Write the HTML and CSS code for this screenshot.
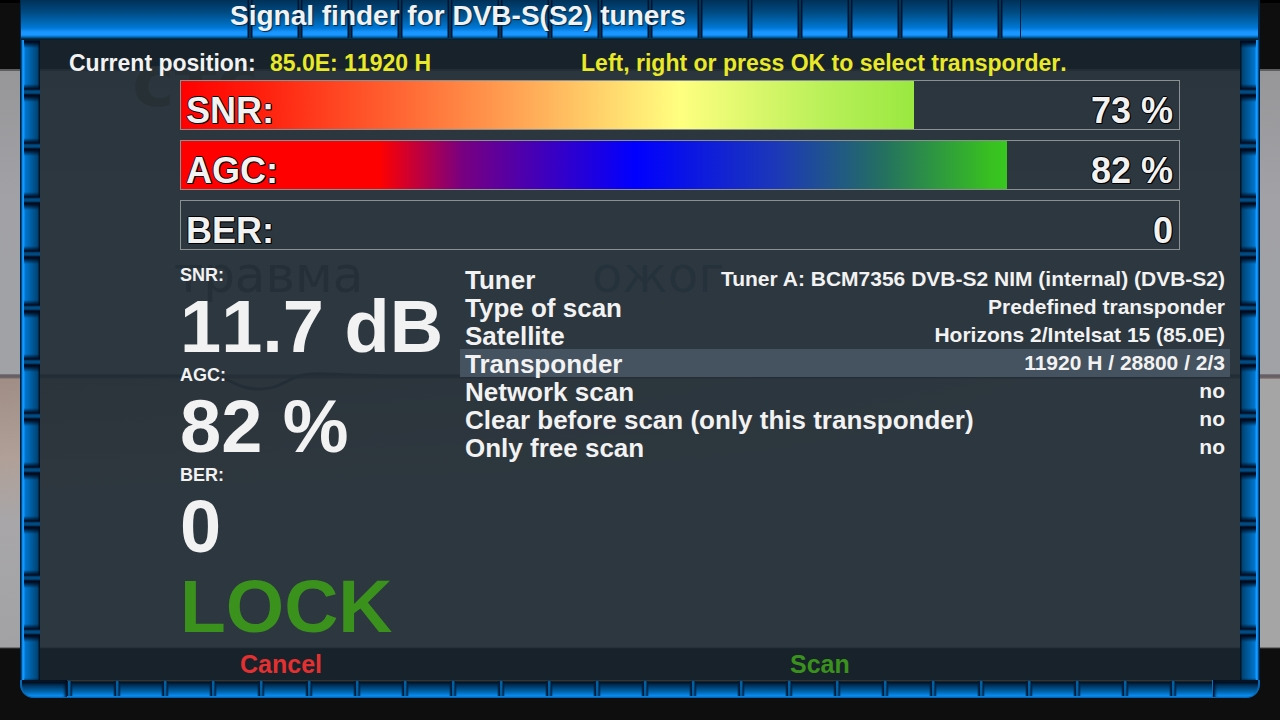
FILE: index.html
```html
<!DOCTYPE html>
<html lang="en">
<head>
<meta charset="utf-8">
<title>Signal finder for DVB-S(S2) tuners</title>
<link rel="stylesheet" href="styles.css">
</head>
<body>
<div class="broadcast" aria-hidden="true">
  <span class="ghost ghost-logo">стс</span>
  <span class="ghost ghost-left">травма</span>
  <span class="ghost ghost-right">ожог</span>
  <svg class="ghost-curve" viewBox="0 0 1280 40"><path d="M0 6H215C230 8 238 20 262 19C285 18 288 5 312 4C330 3 350 6 400 6H560C610 5 620 0 660 0S710 6 760 6H1280" fill="none" stroke="#666066" stroke-width="3"/></svg>
</div>
<div class="window">
  <header class="titlebar">
    <h1 class="title">Signal finder for DVB-S(S2) tuners</h1>
  </header>
  <div class="middle">
    <div class="rail rail-left"></div>
    <main class="panel">
      <div class="position">
        <p class="current">Current position: <strong class="yellow">85.0E: 11920 H</strong></p>
        <p class="hint yellow">Left, right or press OK to select transporder.</p>
      </div>
      <section class="bars">
        <div class="bar"><div class="fill fill-snr" style="width:73.4%"></div><span>SNR:</span><span>73 %</span></div>
        <div class="bar"><div class="fill fill-agc" style="width:82.8%"></div><span>AGC:</span><span>82 %</span></div>
        <div class="bar"><span>BER:</span><span>0</span></div>
      </section>
      <div class="details">
        <section class="readings">
          <dl class="values">
            <dt>SNR:</dt><dd>11.7 dB</dd>
            <dt>AGC:</dt><dd>82 %</dd>
            <dt>BER:</dt><dd>0</dd>
          </dl>
          <p class="lock">LOCK</p>
        </section>
        <ul class="menu">
          <li><span>Tuner</span><span class="value">Tuner A: BCM7356 DVB-S2 NIM (internal) (DVB-S2)</span></li>
          <li><span>Type of scan</span><span class="value">Predefined transponder</span></li>
          <li><span>Satellite</span><span class="value">Horizons 2/Intelsat 15 (85.0E)</span></li>
          <li class="selected"><span>Transponder</span><span class="value">11920 H / 28800 / 2/3</span></li>
          <li><span>Network scan</span><span class="value">no</span></li>
          <li><span>Clear before scan (only this transponder)</span><span class="value">no</span></li>
          <li><span>Only free scan</span><span class="value">no</span></li>
        </ul>
      </div>
      <footer class="actions">
        <button type="button" class="cancel">Cancel</button>
        <button type="button" class="scan">Scan</button>
      </footer>
    </main>
    <div class="rail rail-right"></div>
  </div>
  <div class="base"><div class="base-start"></div><div class="base-tiles"></div><div class="base-end"></div></div>
</div>
</body>
</html>
```
FILE: styles.css
```css
* { box-sizing: border-box; margin: 0; padding: 0; }
body {
  position: relative;
  min-height: 100vh;
  overflow: hidden;
  font-family: "Liberation Sans", Arial, sans-serif;
  font-weight: bold;
  font-kerning: none;
  color: #f2f2f2;
  background:
    linear-gradient(90deg, transparent, #a6a5a6) 0 379px / 100% 268px no-repeat,
    linear-gradient(#000 0 3px, #0e0e0e 3px 69px, #5d5d5f 69px 71px, #97979a 71px, #a2a2a6 200px, #a0a2a6 374px, #776b69 375px 378px, #a08e86 379px, #b0a098 460px, #a8a6a8 520px, #a2a2a5 647px, #444 648px, #0e0e0e 649px);
}
.window {
  position: relative;
  display: flex;
  flex-direction: column;
  min-height: 698px;
  margin: 0 20px 22px;
}
.titlebar {
  --metal: linear-gradient(#003157 0, #004a80 12px, #0066b2 22px, #0078d7 28px, #1a96ff 32px, #1a96ff 35px, #0068b9 37px, #07202f 39px, #07202f 40px);
  height: 40px;
  padding-left: 209px;
  border-left: 1px solid #00284d;
  border-right: 2px solid #00284d;
  background:
    linear-gradient(#001d38, #001d38) 999px 0 / 1px 38px no-repeat,
    var(--metal) -774px 0 / 1000px 40px no-repeat,
    var(--metal) 984px 0 / 1000px 40px no-repeat,
    linear-gradient(90deg, transparent 0, #001529 1px 2px, #00508d 3px, #001529 4px 5px, transparent 6px) 226px 0 / 50px 38px repeat-x,
    var(--metal);
}
.title { font-size: 28px; line-height: 31px; white-space: nowrap; text-shadow: 1px 1px 1px #00284d; }
.middle { flex: 1; display: flex; }
.rail { width: 20px; flex: none; }
.rail-left {
  background:
    linear-gradient(transparent 1px, #000a1c 6px, #004b83 8px 10px, #000a1c 12px 13px, transparent 19px) 4px 43px / 16px 54px,
    linear-gradient(90deg, #00213d 0 1px, #0879dc 2px, #129aff 3px 4px, #0076cf 5px, #0062aa 10px, #004272 18px, #001527 19px);
  background-repeat: repeat-y;
}
.rail-right {
  background:
    linear-gradient(transparent 1px, #000a1c 6px, #004b83 8px 10px, #000a1c 12px 13px, transparent 19px) 0 43px / 16px 54px,
    linear-gradient(270deg, #00213d 0 1px, #0879dc 2px, #129aff 3px 4px, #0076cf 5px, #0062aa 10px, #004272 18px, #001527 19px);
  background-repeat: repeat-y;
}
.panel {
  flex: 1;
  min-width: 0;
  display: flex;
  flex-direction: column;
  background: rgba(25, 37, 47, 0.86);
}
.position { display: flex; gap: 150px; height: 40px; padding-left: 29px; font-size: 23px; line-height: 46px; white-space: nowrap; }
.current strong { margin-left: 8px; }
.yellow { color: #e9e928; }
.bars { display: flex; flex-direction: column; gap: 10px; padding: 0 60px 0 140px; }
.bar {
  position: relative;
  display: flex;
  justify-content: space-between;
  height: 50px;
  padding: 0 6px 0 5px;
  border: 1px solid #8b9190;
  font-size: 36px;
  line-height: 60px;
  text-shadow: 1px 0 #000, -1px 0 #000, 0 1px #000, 0 -1px #000, 1px 1px #000;
}
.bar span { position: relative; }
.fill { position: absolute; inset: 0 auto 0 0; }
.fill-snr { background: linear-gradient(90deg, #f00 0, #ff1c0c 10%, #ff6a35 31%, #ffa454 46%, #ffff80 68%, #b8f058 88%, #9ae840 100%); }
.fill-agc { background: linear-gradient(90deg, #f00 0 24%, #780080 34%, #00f 55%, #1c38b8 72%, #247060 85%, #38c020 98%, #38c820 100%); }
.details { flex: 1; display: flex; gap: 20px; padding: 15px 10px 0 140px; }
.readings { width: 260px; flex: none; white-space: nowrap; }
dt { margin-bottom: 4px; font-size: 18px; line-height: 20px; }
dd { font-size: 74px; line-height: 76px; }
.lock { font-size: 75px; line-height: 82px; color: #3a921c; }
.menu { flex: 1; list-style: none; font-kerning: normal; }
.menu li { display: flex; justify-content: space-between; height: 28px; padding: 0 5px; font-size: 26px; line-height: 30px; white-space: nowrap; }
.menu .value { font-size: 21px; line-height: 28px; }
.menu .selected { background: #45525f; }
.actions { display: flex; gap: 468px; height: 33px; padding-left: 200px; }
.actions button { border: 0; background: none; font: bold 25px/32px "Liberation Sans", Arial, sans-serif; }
.actions .cancel { color: #e43030; }
.actions .scan { color: #3a921c; }
.base { display: flex; height: 18px; overflow: hidden; border-radius: 0 0 14px 14px; background: linear-gradient(#333 0 1px, #00101f 2px, #002e55 5px, #0067b0 12px, #0a8df5 16px, #0057a0 18px); }
.base-start { width: 47px; border-radius: 0 0 0 12px; box-shadow: inset 2px -1px #0868b8, inset -2px 2px 3px #000d20; }
.base-tiles { flex: 1; background: linear-gradient(90deg, #001a36 0 1px, #0060a4 1px 3px, #001a36 4px, transparent 6px 46px, #001a36 48px) 0 1px / 48px 15px repeat-x; }
.base-end { width: 48px; border-left: 1px solid #0870c0; border-radius: 0 0 12px 0; box-shadow: inset -2px -1px #0868b8, inset 2px 2px 3px #000d20; }
.broadcast { position: absolute; inset: 0; font-family: "DejaVu Sans", sans-serif; font-weight: normal; }
.ghost { position: absolute; color: #6a6c72; line-height: 1; }
.ghost-logo { left: 132px; top: 45px; font-size: 72px; font-weight: bold; color: #80745c; }
.ghost-left { left: 174px; top: 250px; font-size: 50px; }
.ghost-right { left: 592px; top: 250px; font-size: 50px; color: #7c7e84; }
.ghost-curve { position: absolute; left: 0; top: 370px; width: 100%; }
```
